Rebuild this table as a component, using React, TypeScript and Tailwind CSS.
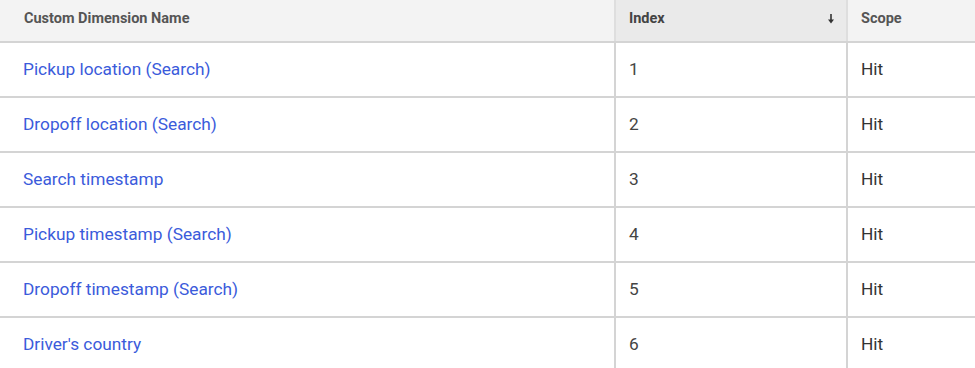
import React from 'react';

const rows = [
  { name: 'Pickup location (Search)', index: 1, scope: 'Hit' },
  { name: 'Dropoff location (Search)', index: 2, scope: 'Hit' },
  { name: 'Search timestamp', index: 3, scope: 'Hit' },
  { name: 'Pickup timestamp (Search)', index: 4, scope: 'Hit' },
  { name: 'Dropoff timestamp (Search)', index: 5, scope: 'Hit' },
  { name: "Driver's country", index: 6, scope: 'Hit' },
];

const App: React.FC = () => {
  return (
    <div className="w-[975px] h-[368px] overflow-hidden bg-white" style={{ fontFamily: 'Roboto, "Liberation Sans", sans-serif' }}>
      <div className="grid grid-cols-[614px_234px_1fr] h-[43px] bg-[#f3f3f3] border-b-2 border-[#d4d4d4]">
        <div className="flex items-center pl-6 pb-[3px] text-[14.5px] font-bold text-[#555]">Custom Dimension Name</div>
        <div className="flex items-center justify-between pl-[13px] pr-[11px] pb-[3px] bg-[#eaeaea] border-l-2 border-r-2 border-[#dedede] text-[14.5px] font-bold text-[#444]">
          <span>Index</span>
          <svg width="8" height="10" viewBox="0 0 8 10">
            <path d="M4 0v7" stroke="#333" strokeWidth="1.6" />
            <path d="M1 5.5h6L4 9.5z" fill="#333" />
          </svg>
        </div>
        <div className="flex items-center pl-[13px] pb-[3px] text-[14.5px] font-bold text-[#555]">Scope</div>
      </div>
      {rows.map((r) => (
        <div key={r.index} className="grid grid-cols-[614px_234px_1fr] h-[55px] border-b-2 border-[#d4d4d4]">
          <div className="flex items-center pl-[23px] text-[17.3px] text-[#3b5bdb]">{r.name}</div>
          <div className="flex items-center pl-[13px] border-l-2 border-r-2 border-[#d4d4d4] text-[17.3px] text-[#444]">{r.index}</div>
          <div className="flex items-center pl-[13px] text-[17.3px] text-[#333]">{r.scope}</div>
        </div>
      ))}
    </div>
  );
};

export default App;
